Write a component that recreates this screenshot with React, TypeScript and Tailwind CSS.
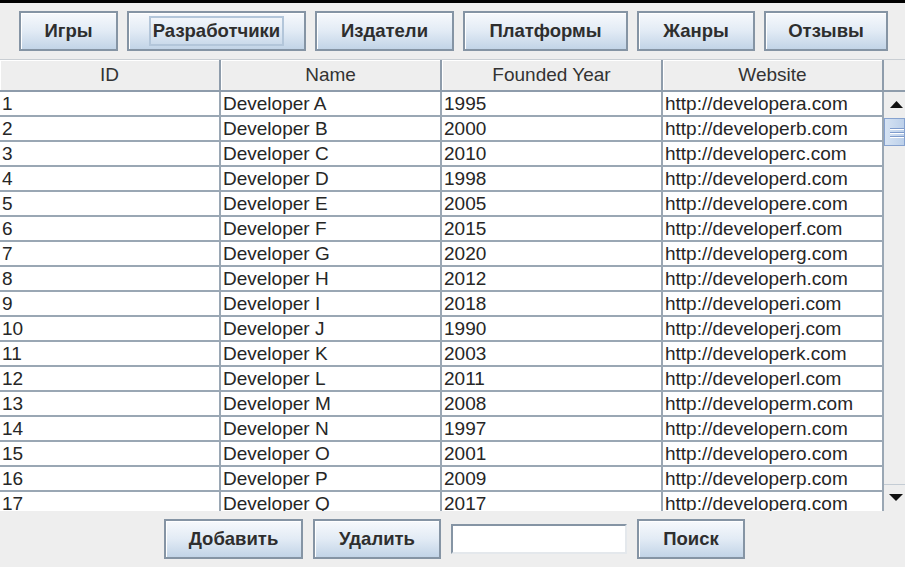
import React from 'react';

type Developer = { id: number; name: string; year: number; site: string };

const letters = 'ABCDEFGHIJKLMNOPQ'.split('');
const years = [1995, 2000, 2010, 1998, 2005, 2015, 2020, 2012, 2018, 1990, 2003, 2011, 2008, 1997, 2001, 2009, 2017];

const developers: Developer[] = letters.map((l, i) => ({
  id: i + 1,
  name: `Developer ${l}`,
  year: years[i],
  site: `http://developer${l.toLowerCase()}.com`,
}));

const columns = ['ID', 'Name', 'Founded Year', 'Website'];

const MetalButton: React.FC<{ label: string; width: string; focused?: boolean }> = ({ label, width, focused }) => (
  <button
    className={`${width} h-[40px] flex items-center justify-center border-2 border-[#8594a4] bg-gradient-to-b from-[#f7f9fc] via-[#e2ebf5] to-[#c2d4e7] shadow-[inset_1px_1px_0_#ffffff] text-[18.5px] font-bold text-[#2e2e2e]`}
  >
    {focused ? (
      <span className="px-[2px] leading-[26px] border-2 border-[#b3c6da]">{label}</span>
    ) : (
      label
    )}
  </button>
);

const App: React.FC = () => {
  return (
    <div
      className="w-[905px] h-[567px] bg-[#eeeeee] overflow-hidden flex flex-col"
      style={{ fontFamily: '"Liberation Sans", Arial, sans-serif' }}
    >
      <div className="h-[3px] bg-black" />

      {/* top nav buttons */}
      <div className="pt-[8px] flex justify-center gap-[9px] pl-[2px]">
        <MetalButton label="Игры" width="w-[99px]" />
        <MetalButton label="Разработчики" width="w-[179px]" focused />
        <MetalButton label="Издатели" width="w-[139px]" />
        <MetalButton label="Платформы" width="w-[165px]" />
        <MetalButton label="Жанры" width="w-[118px]" />
        <MetalButton label="Отзывы" width="w-[124px]" />
      </div>

      {/* table */}
      <div className="mt-[8px] h-[452px] flex border-t border-[#c9ced3]">
        <div className="w-[884px] flex flex-col">
          <div className="grid grid-cols-[221px_221px_221px_221px] h-[32px]">
            {columns.map((c) => (
              <div
                key={c}
                className="bg-[#eeeeee] border-r-2 border-b-2 border-[#8e9cab] shadow-[inset_1px_1px_0_#ffffff] flex items-center justify-center text-[19px] text-[#333333]"
              >
                {c}
              </div>
            ))}
          </div>
          <div className="flex-1 overflow-hidden">
            {developers.map((d) => (
              <div key={d.id} className="grid grid-cols-[221px_221px_221px_221px] h-[25px]">
                {[d.id, d.name, d.year, d.site].map((v, i) => (
                  <div
                    key={i}
                    className="bg-white border-r-2 border-b-2 border-[#9aa7b4] pl-[2px] leading-[23px] text-[19px] text-[#262626] whitespace-nowrap overflow-hidden"
                  >
                    {v}
                  </div>
                ))}
              </div>
            ))}
          </div>
        </div>

        {/* vertical scrollbar */}
        <div className="flex-1 flex flex-col">
          <div className="h-[32px] bg-[#eeeeee] border-b-2 border-[#8e9cab]" />
          <div className="flex-1 flex flex-col bg-[#eeeeee]">
            <div className="h-[25px] flex items-center pl-[6px]">
              <svg width="13" height="7" viewBox="0 0 13 7">
                <polygon points="6.5,0 13,7 0,7" fill="#111111" />
              </svg>
            </div>
            <div className="mt-[1px] h-[28px] border border-[#86a2cf] bg-gradient-to-r from-[#d6e3f3] to-[#bcd0ea] flex flex-col justify-center gap-[2px] pl-[5px]">
              <div className="h-[1px] bg-[#7e9bcc] shadow-[0_1px_0_#ffffff]" />
              <div className="h-[1px] bg-[#7e9bcc] shadow-[0_1px_0_#ffffff] mt-[1px]" />
              <div className="h-[1px] bg-[#7e9bcc] shadow-[0_1px_0_#ffffff] mt-[1px]" />
            </div>
            <div className="flex-1" />
            <div className="h-[25px] flex items-center pl-[5px] border-t border-[#c4ccd4] mb-[2px]">
              <svg width="14" height="7" viewBox="0 0 14 7">
                <polygon points="0,0 14,0 7,7" fill="#111111" />
              </svg>
            </div>
          </div>
        </div>
      </div>

      {/* bottom actions */}
      <div className="mt-[8px] flex justify-center items-center gap-[10px] pl-[4px]">
        <MetalButton label="Добавить" width="w-[139px]" />
        <MetalButton label="Удалить" width="w-[128px]" />
        <input
          className="w-[176px] h-[30px] bg-white border-2 border-t-[#8594a4] border-l-[#8594a4] border-b-[#e4e8ec] border-r-[#e4e8ec] outline-none"
          defaultValue=""
        />
        <MetalButton label="Поиск" width="w-[108px]" />
      </div>
    </div>
  );
};

export default App;
